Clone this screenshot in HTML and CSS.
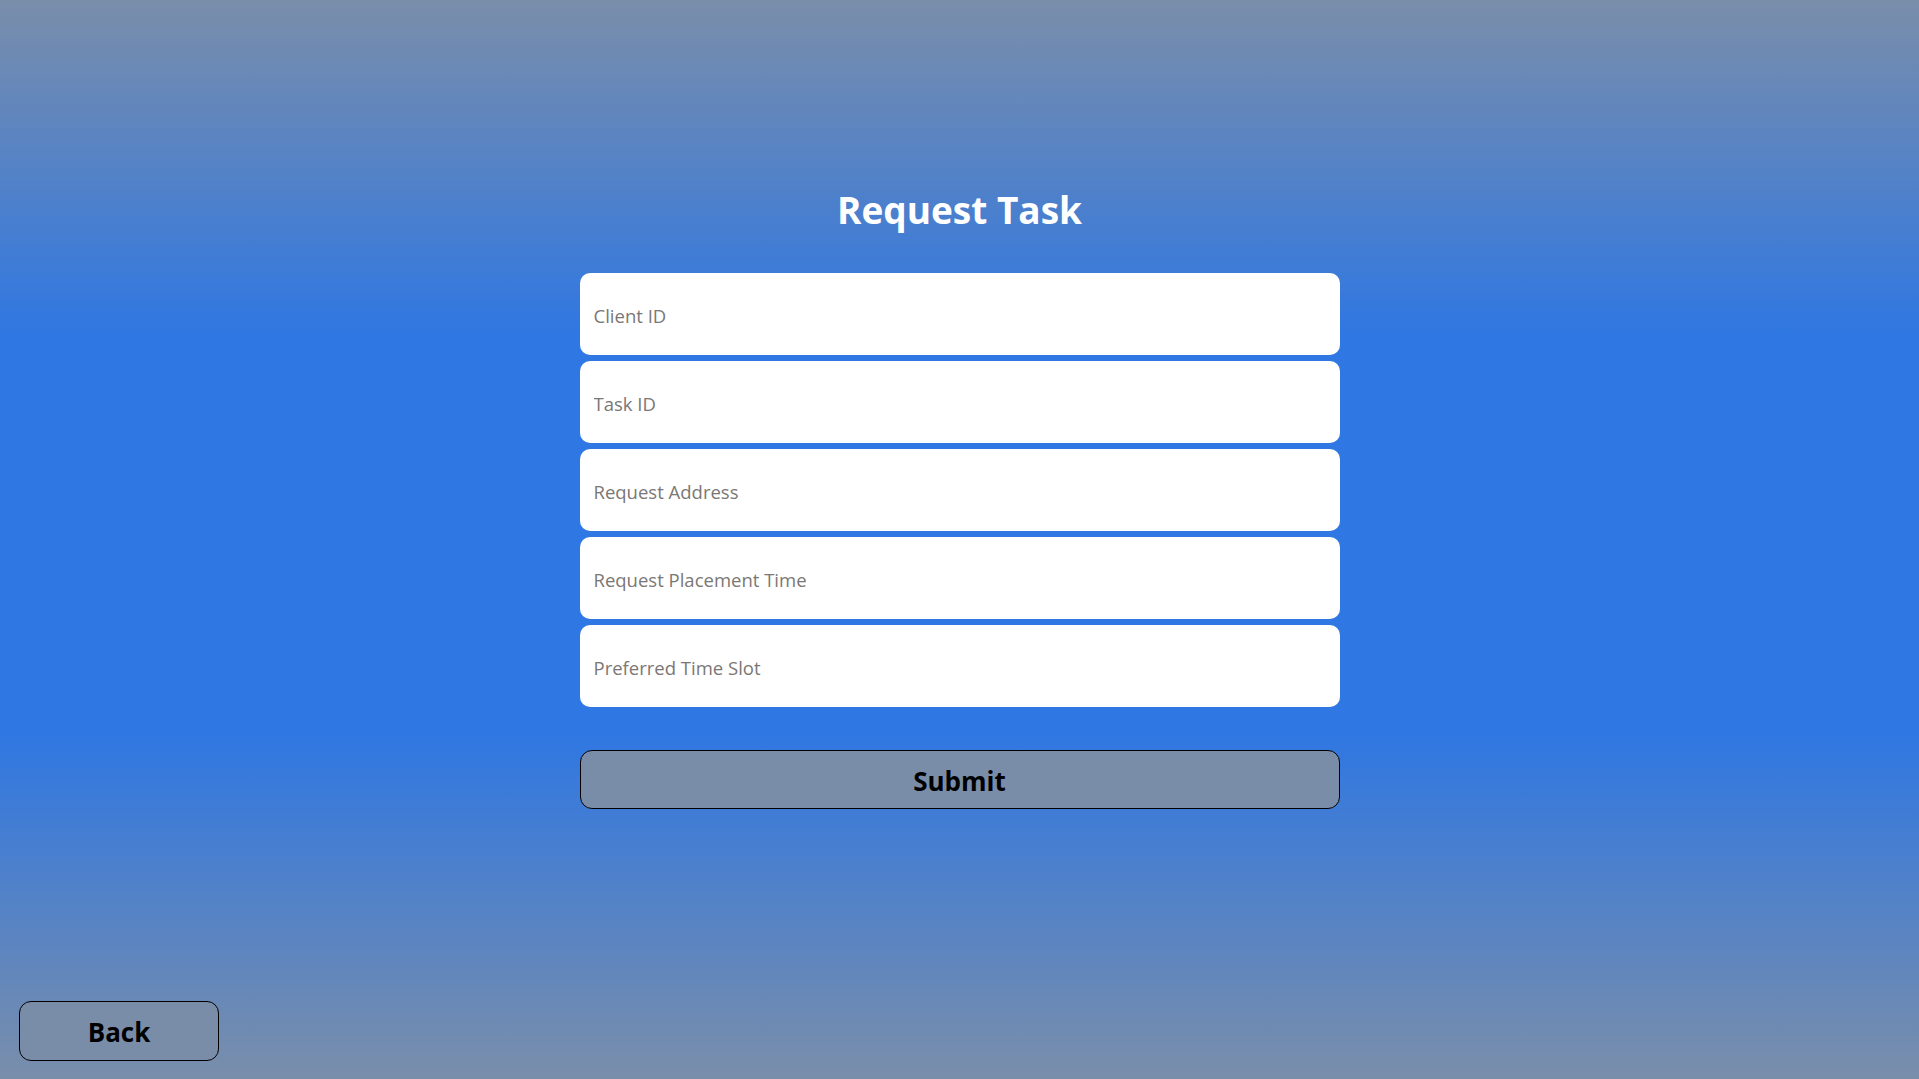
FILE: index.html
```html
<!DOCTYPE html>
<html lang="en">
<head>
<meta charset="utf-8">
<title>Request Task</title>
<link rel="stylesheet" href="styles.css">
</head>
<body>
<div class="page">
  <main class="form-wrap">
    <h1 class="title">Request Task</h1>
    <form class="form">
      <div class="fields">
        <input class="field" type="text" placeholder="Client ID">
        <input class="field" type="text" placeholder="Task ID">
        <input class="field" type="text" placeholder="Request Address">
        <input class="field" id="placement" type="text" placeholder="Request Placement Time" autofocus>
        <input class="field" type="text" placeholder="Preferred Time Slot">
      </div>
      <button class="btn submit" type="button">Submit</button>
    </form>
  </main>
  <button class="btn back" type="button">Back</button>
</div>
<script src="script.js"></script>
</body>
</html>
```

FILE: styles.css
```css
* { box-sizing: border-box; }
html, body { margin: 0; padding: 0; }
body {
  font-family: "Segoe UI", "Open Sans", "Noto Sans", sans-serif;
  background: linear-gradient(to bottom, #7a8eaa 0%, #2f77e2 31%, #2f77e2 68%, #7a8eaa 100%);
  min-height: 100vh;
}
.page {
  min-height: 100vh;
  display: flex;
  flex-direction: column;
  align-items: center;
}
.form-wrap {
  width: 760px;
  padding-top: 186px;
  display: flex;
  flex-direction: column;
}
.title {
  margin: 0;
  text-align: center;
  color: #fff;
  font-size: 37px;
  line-height: 48px;
  font-weight: 700;
}
.form {
  margin-top: 39px;
  display: flex;
  flex-direction: column;
}
.fields {
  display: flex;
  flex-direction: column;
  gap: 6px;
}
.field {
  height: 82px;
  border: none;
  border-radius: 10px;
  background: #fff;
  padding: 2px 13px 0 14px;
  font-family: inherit;
  font-size: 18.5px;
  color: #333;
  outline: none;
  caret-color: #000;
}
.field::placeholder { color: #7b7775; }
.btn {
  font-family: inherit;
  font-weight: 700;
  font-size: 26px;
  color: #000;
  background: #7a8da8;
  border: 1px solid #000;
  border-radius: 12px;
  padding: 2px 0 0;
  cursor: pointer;
}
.submit {
  margin-top: 43px;
  height: 59px;
  width: 100%;
}
.back {
  margin-top: auto;
  align-self: flex-start;
  margin-left: 19px;
  margin-bottom: 18px;
  width: 200px;
  height: 60px;
}
```

FILE: script.js
```js
document.getElementById('placement').focus();
```
